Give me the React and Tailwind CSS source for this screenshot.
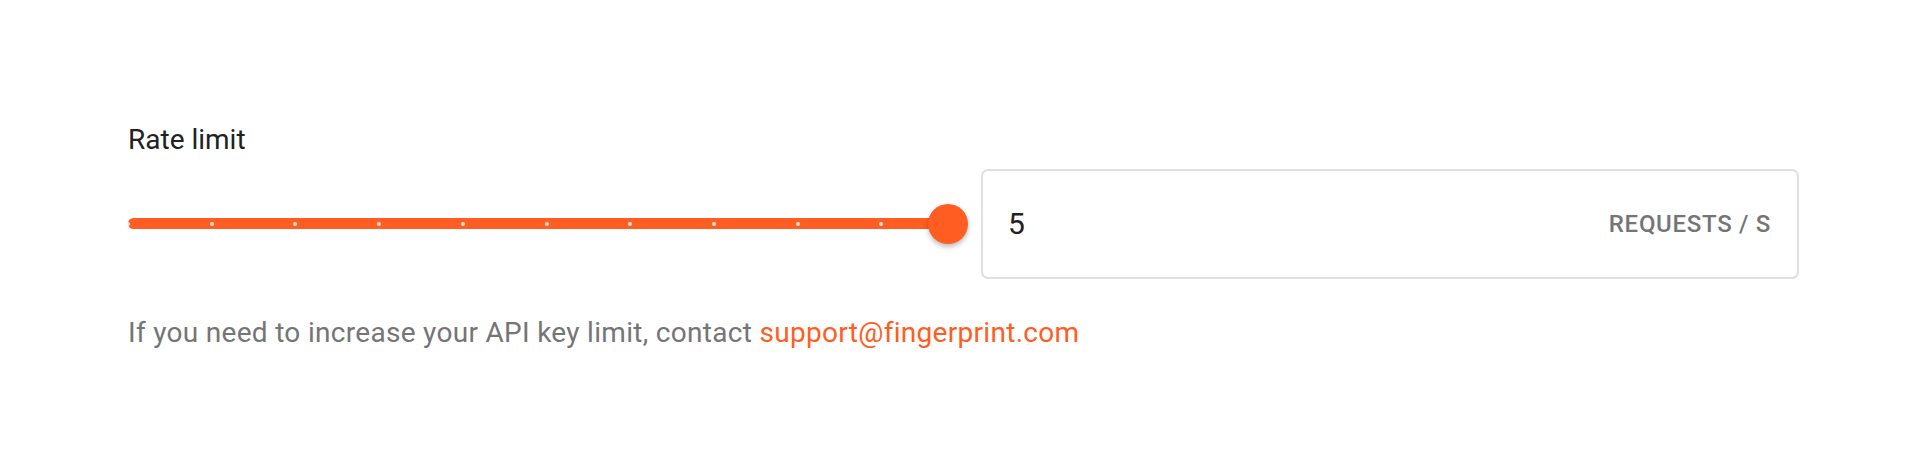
import React from 'react';

const RateSlider = ({ value = 5, ticks = 10 }) => {
  const step = 83.7;
  return (
    <div className="relative w-[820px] h-[40px] shrink-0">
      {/* track */}
      <div className="absolute left-0 right-0 top-[14px] h-[11px] rounded-full bg-[#ff5d22]" />
      {/* tick marks */}
      {Array.from({ length: ticks }).map((_, i) => (
        <span
          key={i}
          className="absolute top-[18px] w-[4px] h-[4px] -ml-[2px] rounded-full bg-white/80"
          style={{ left: i * step }}
        />
      ))}
      {/* thumb */}
      <div className="absolute top-0 right-0 translate-x-1/2 w-[40px] h-[40px] rounded-full bg-[#ff5d22] shadow-[0_3px_5px_rgba(0,0,0,0.25)]" />
      <input type="hidden" value={value} readOnly />
    </div>
  );
};

const App = () => {
  return (
    <div className="min-h-[476px] bg-white pl-[128px] pt-[124px] font-['Roboto','Liberation_Sans',sans-serif]">
      <h2 className="text-[28px] leading-[32px] font-normal text-[#212121]">Rate limit</h2>

      <div className="mt-[13px] flex items-center">
        <RateSlider value={5} />
        <div className="ml-[33px] w-[818px] h-[110px] shrink-0 flex items-center justify-between border-2 border-[#e0e0e0] rounded-[7px] pl-[25px] pr-[26px]">
          <span className="text-[30px] leading-none text-[#212121]">5</span>
          <span className="text-[24px] leading-none font-medium tracking-[0.7px] text-[#757575] uppercase">
            Requests / s
          </span>
        </div>
      </div>

      <p className="mt-[38px] text-[28px] leading-[32px] tracking-[0.3px] text-[#757575]">
        If you need to increase your API key limit, contact{' '}
        <a href="#" className="text-[#ff5d22]">support@fingerprint.com</a>
      </p>
    </div>
  );
};

export default App;
